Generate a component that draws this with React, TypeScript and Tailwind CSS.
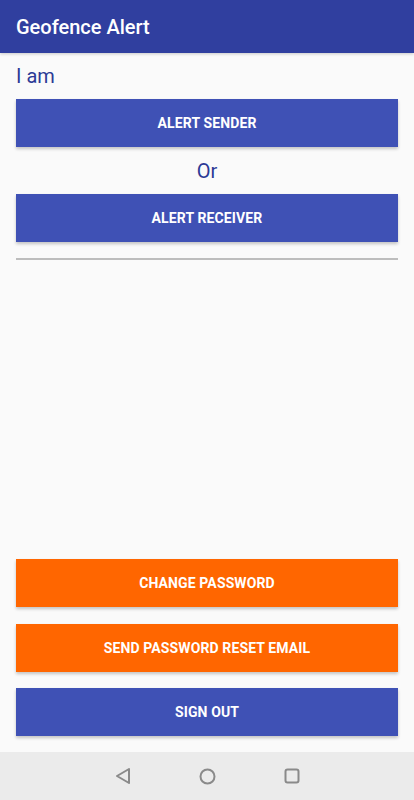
import React from "react";

function Btn({ label, color }: { label: string; color: "blue" | "orange" }) {
  const bg = color === "blue" ? "bg-[#3F51B5]" : "bg-[#FF6600]";
  return (
    <div
      className={`${bg} h-12 w-full flex items-center justify-center text-white text-[14px] font-bold tracking-[0.12px] shadow-[0_2px_3px_rgba(0,0,0,0.22)]`}
    >
      {label}
    </div>
  );
}

export default function App() {
  return (
    <div
      className="w-[414px] h-[800px] bg-[#FAFAFA] flex flex-col"
      style={{ fontFamily: "Roboto, 'Noto Sans', sans-serif" }}
    >
      <div className="h-[53px] bg-[#303F9F] flex items-center pl-4 text-white text-[20px] font-medium shrink-0 shadow-[0_1px_3px_rgba(0,0,0,0.2)]">
        Geofence Alert
      </div>
      <div className="flex-1 flex flex-col px-4">
        <div className="mt-[11px] h-6 leading-6 text-[20px] text-[#2c3a96]">I am</div>
        <div className="mt-[11px]">
          <Btn label="ALERT SENDER" color="blue" />
        </div>
        <div className="h-[47px] flex items-center justify-center text-[20px] text-[#2c3a96]">Or</div>
        <Btn label="ALERT RECEIVER" color="blue" />
        <div className="mt-4 h-[2px] bg-[#BDBDBD]" />
        <div className="flex-1" />
        <div className="flex flex-col">
          <Btn label="CHANGE PASSWORD" color="orange" />
          <div className="h-[17px]" />
          <Btn label="SEND PASSWORD RESET EMAIL" color="orange" />
          <div className="h-4" />
          <Btn label="SIGN OUT" color="blue" />
        </div>
        <div className="h-4" />
      </div>
      <div className="h-12 bg-[#EBEBEB] shrink-0 flex items-center pl-[115px] gap-[68px]">
        <svg width="16" height="18" viewBox="0 0 16 18">
          <path d="M14 2 L2 9 L14 16 Z" fill="none" stroke="#8a8a8a" strokeWidth="2" strokeLinejoin="round" />
        </svg>
        <svg width="17" height="17" viewBox="0 0 17 17">
          <circle cx="8.5" cy="8.5" r="7" fill="none" stroke="#8a8a8a" strokeWidth="2" />
        </svg>
        <svg width="16" height="16" viewBox="0 0 16 16">
          <rect x="1.5" y="1.5" width="13" height="13" rx="2" fill="none" stroke="#8a8a8a" strokeWidth="2" />
        </svg>
      </div>
    </div>
  );
}
